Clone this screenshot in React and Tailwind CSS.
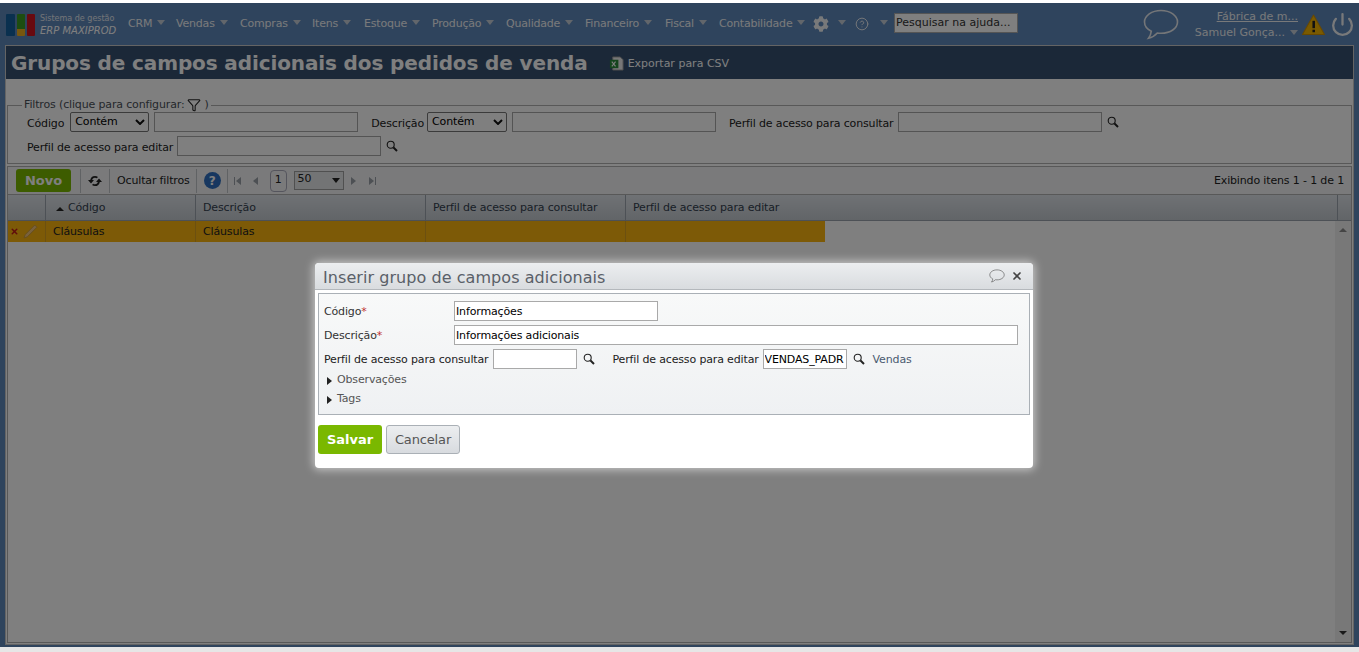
import { CircleHelp, Power, Filter, X } from 'lucide-react'
import { FaCog } from 'react-icons/fa'

const menus = [
  ['CRM', 'w-[48px]'],
  ['Vendas', 'w-[64px]'],
  ['Compras', 'w-[72px]'],
  ['Itens', 'w-[52px]'],
  ['Estoque', 'w-[68px]'],
  ['Produção', 'w-[74px]'],
  ['Qualidade', 'w-[79px]'],
  ['Financeiro', 'w-[80px]'],
  ['Fiscal', 'w-[54px]'],
  ['Contabilidade', 'w-[94px]'],
]

const Caret = ({ className = 'border-t-[#c4ccd6]' }) => (
  <span className={`inline-block w-0 h-0 border-x-[4px] border-x-transparent border-t-[5px] ${className}`} />
)

const Bubble = ({ className }) => (
  <svg viewBox="0 0 36 32" className={className} fill="none" stroke="currentColor" strokeWidth="1.6">
    <path d="M18 2C8.6 2 1.5 7.2 1.5 13.5c0 3.900 2.700 7.200 6.800 9.200-.3 2.700-1.200 5-2.800 7.100 3.600-.8 6.600-2.800 8.800-5.300 1.200.2 2.400.3 3.700.3 9.400 0 16.500-5 16.500-11.300S27.400 2 18 2z" />
  </svg>
)

const Lupa = ({ className = '' }) => (
  <svg viewBox="0 0 12 12" className={`w-[12px] h-[12px] shrink-0 ${className}`} fill="none" stroke="#222">
    <circle cx="4.700" cy="4.700" r="3.500" strokeWidth="1.100" />
    <path d="M7.500 7.500L11 11" strokeWidth="2" />
  </svg>
)

const TextField = ({ className, value = '' }) => (
  <input
    readOnly
    value={value}
    className={`h-[20px] bg-white border border-[#a9a9a9] px-[1px] text-[11px] text-black outline-none ${className}`}
  />
)

const SelectBox = ({ className }) => (
  <div className={`h-[20px] bg-white border border-[#767676] rounded-[2px] pl-[4px] flex items-center justify-between pr-[3px] text-black ${className}`}>
    <span>Contém</span>
    <svg viewBox="0 0 10 6" className="w-[10px] h-[6px]" fill="none" stroke="#111" strokeWidth="2"><path d="M1 1l4 4 4-4" /></svg>
  </div>
)

const HeaderCell = ({ className, children }) => (
  <div className={`h-full border-r border-[#9aa3ad] flex items-center pl-[7px] pt-[2px] text-[#333f4f] ${className}`}>{children}</div>
)

const PagerArrow = ({ flip, bar }) => (
  <span className={`flex items-center gap-[1px] ${flip ? 'flex-row-reverse' : ''}`}>
    {bar && <span className="w-[1px] h-[8px] bg-[#9aa0a8]" />}
    <span className={`w-0 h-0 border-y-[4px] border-y-transparent ${flip ? 'border-l-[5px] border-l-[#9aa0a8]' : 'border-r-[5px] border-r-[#9aa0a8]'}`} />
  </span>
)

const App = () => {
  return (
    <div className="relative h-[652px] w-[1359px] overflow-hidden bg-[#e6e6e6] text-[11px] tracking-[-0.15px] text-[#222] font-['DejaVu_Sans','Liberation_Sans',sans-serif]">
      <div className="h-[3px] bg-white" />

      <div className="relative h-[644px] bg-[#5f88ba]">
        {/* Top navigation */}
        <div className="h-[42px] flex items-center text-[#fff]">
          <div className="w-[128px] flex items-center pl-[6px] shrink-0">
            <div className="flex gap-[2px] h-[22px] mt-[1px]">
              <span className="w-[9px] rounded-[1px] bg-[#14609f]" />
              <span className="w-[8px] rounded-[1px] flex flex-col">
                <span className="h-[15px] bg-[#3a9a20] rounded-t-[1px]" />
                <span className="h-[7px] bg-[#f0ae1e] rounded-b-[1px]" />
              </span>
              <span className="w-[8px] rounded-[1px] bg-[#d01420]" />
            </div>
            <div className="ml-[5px] leading-[12px] mt-[1px] tracking-normal">
              <div className="text-[8px] text-[#e4e9f0]">Sistema de gestão</div>
              <div className="text-[10px] italic text-[#fff]">ERP MAXIPROD</div>
            </div>
          </div>
          {menus.map(([label, width]) => (
            <div key={label} className={`${width} shrink-0 flex items-center gap-[5px] text-[#f2f4f7] tracking-[-0.2px]`}>
              <span>{label}</span>
              <span className="-mt-[4px] flex"><Caret /></span>
            </div>
          ))}
          <div className="w-[25px] shrink-0">
            <FaCog size={16} className="text-[#f0f2f5]" />
          </div>
          <span className="-mt-[4px] w-[17px] shrink-0 flex"><Caret /></span>
          <CircleHelp size={14} strokeWidth={1.6} className="text-[#f0f2f5] shrink-0" />
          <span className="-mt-[4px] w-[14px] ml-[11px] shrink-0 flex"><Caret /></span>
          <div className="w-[124px] h-[20px] -mt-[2px] bg-[#fff] border border-[#aaa] pl-[1px] flex items-center text-[#333] shrink-0 tracking-normal">Pesquisar na ajuda...</div>
          <Bubble className="w-[36px] h-[33px] ml-[125px] text-[#e8ecf1] shrink-0" />
          <div className="w-[104px] ml-[15px] shrink-0 text-[#f0f2f5] text-right">
            <div className="underline leading-[14px] tracking-normal mt-[1px]">Fábrica de m...</div>
            <div className="flex items-center justify-end gap-[5px] leading-[14px] mt-[2px] tracking-normal">
              <span>Samuel Gonça...</span>
              <span className="flex"><Caret /></span>
            </div>
          </div>
          <svg viewBox="0 0 22 20" className="w-[23px] h-[21px] ml-[4px] shrink-0">
            <path d="M11 1L21.500 19.500H.5z" fill="#f5b400" stroke="#d09000" strokeWidth="1" strokeLinejoin="round" />
            <rect x="10" y="6.500" width="2.400" height="7" fill="#222" />
            <rect x="10" y="15" width="2.400" height="2.400" fill="#222" />
          </svg>
          <Power size={25} strokeWidth={2.2} className="ml-[5px] text-[#f0f2f5] shrink-0" />
        </div>

        {/* Page panel */}
        <div className="mx-[5px] h-[600px] border border-[#c8c8c8] bg-white flex flex-col">
          {/* Title */}
          <div className="h-[33px] bg-[#365070] flex items-center pl-[5px] shrink-0">
            <h1 className="text-[20px] leading-[33px] tracking-[-0.12px] font-bold text-white mt-[1px]">Grupos de campos adicionais dos pedidos de venda</h1>
            <svg viewBox="0 0 16 16" className="w-[15px] h-[15px] ml-[21px] mt-[1px]">
              <path d="M4 1h8l3 3v11H4z" fill="#eee" stroke="#999" />
              <rect x="1" y="4" width="9" height="9" fill="#2a8a3a" />
              <path d="M3 6l4 5M7 6l-4 5" stroke="#fff" strokeWidth="1.200" />
            </svg>
            <span className="ml-[4px] text-white tracking-normal mt-[3px]">Exportar para CSV</span>
          </div>

          {/* Filters */}
          <fieldset className="mt-[19px] mx-[1px] h-[66px] border border-[#b0b0b0] px-[19px] shrink-0">
            <legend className="ml-[-5px] px-[2px] flex items-center text-[#4a5058] leading-[14px]">
              Filtros (clique para configurar:
              <Filter size={14} strokeWidth={1.8} className="mx-[3px] text-[#222]" />)
            </legend>
            <div className="flex items-center h-[20px]">
              <span className="pt-[5px]">Código</span>
              <SelectBox className="w-[79px] ml-[6px]" />
              <TextField className="w-[204px] ml-[5px]" />
              <span className="ml-[13px] pt-[5px]">Descrição</span>
              <SelectBox className="w-[80px] ml-[3px]" />
              <TextField className="w-[204px] ml-[5px]" />
              <span className="ml-[13px] pt-[5px]">Perfil de acesso para consultar</span>
              <TextField className="w-[204px] ml-[5px]" />
              <Lupa className="ml-[5px]" />
            </div>
            <div className="flex items-center h-[20px] mt-[4px]">
              <span className="pt-[5px]">Perfil de acesso para editar</span>
              <TextField className="w-[204px] ml-[4px]" />
              <Lupa className="ml-[5px]" />
            </div>
          </fieldset>

          {/* Toolbar */}
          <div className="mt-[2px] mx-[1px] h-[28px] border-x border-t border-[#b0b0b0] bg-[#f4f5f6] flex items-center shrink-0">
            <button className="ml-[8px] w-[55px] h-[23px] rounded-[3px] bg-[#7ab800] text-white font-bold text-[13px] tracking-normal">Novo</button>
            <span className="ml-[9px] h-[24px] w-[1px] bg-[#c0c4c8]" />
            <svg viewBox="0 0 14 12" className="w-[14px] h-[12px] mx-[7px]" fill="none" stroke="#222" strokeWidth="1.800">
              <path d="M3 5.500C3.500 3 5 1.800 7 1.800c1 0 1.800.3 2.400.8" />
              <path d="M11 6.500c-.5 2.500-2 3.700-4 3.700-1 0-1.800-.3-2.400-.8" />
              <path d="M0 5h6L3 8.500zM8 7h6l-3-3.500z" fill="#222" stroke="none" />
            </svg>
            <span className="h-[24px] w-[1px] bg-[#c0c4c8]" />
            <span className="ml-[7px] pt-[2px]">Ocultar filtros</span>
            <span className="ml-[6px] h-[24px] w-[1px] bg-[#c0c4c8]" />
            <span className="ml-[7px] w-[17px] h-[17px] rounded-full bg-[#2f6fc0] text-white font-bold text-[12px] flex items-center justify-center">?</span>
            <span className="ml-[6px] h-[24px] w-[1px] bg-[#c0c4c8]" />
            <span className="ml-[6px]"><PagerArrow bar /></span>
            <span className="ml-[12px]"><PagerArrow /></span>
            <span className="ml-[12px] w-[17px] h-[22px] border border-[#aab] rounded-[4px] flex items-center justify-center">1</span>
            <div className="ml-[7px] w-[50px] h-[19px] border border-[#a0a0a0] bg-[#e6e8ea] pl-[3px] flex items-center justify-between pr-[3px]">
              <span className="-mt-[2px]">50</span>
              <Caret className="border-t-[#222]" />
            </div>
            <span className="ml-[7px]"><PagerArrow flip /></span>
            <span className="ml-[13px]"><PagerArrow flip bar /></span>
            <span className="ml-auto pr-[7px] pt-[1px]">Exibindo itens 1 - 1 de 1</span>
          </div>

          {/* Grid */}
          <div className="mx-[1px] mb-[1px] flex-1 border border-[#b0b0b0] flex flex-col min-h-0">
            <div className="h-[26px] shrink-0 flex border-b border-[#9aa3ad] bg-gradient-to-b from-[#dfe4ea] to-[#c4cad0]">
              <HeaderCell className="w-[38px]" />
              <HeaderCell className="w-[150px] pl-[10px] gap-[4px]">
                <span className="w-0 h-0 border-x-[4px] border-x-transparent border-b-[4px] border-b-[#222]" />
                Código
              </HeaderCell>
              <HeaderCell className="w-[230px]">Descrição</HeaderCell>
              <HeaderCell className="w-[200px]">Perfil de acesso para consultar</HeaderCell>
              <HeaderCell className="w-[712px]">Perfil de acesso para editar</HeaderCell>
              <div className="flex-1" />
            </div>
            <div className="flex flex-1 min-h-0">
              <div className="flex-1">
                <div className="h-[21px] w-[817px] flex bg-[#fab40e] text-[#222]">
                  <div className="w-[38px] h-full border-r border-[#d9a020] flex items-center pl-[2px] gap-[4px]">
                    <X size={9} strokeWidth={4} className="text-[#c01818]" />
                    <svg viewBox="0 0 14 14" className="w-[15px] h-[15px]">
                      <path d="M1 13l1-3 9-9 2 2-9 9z" fill="#f2c27a" stroke="#c89a40" strokeWidth=".8" />
                    </svg>
                  </div>
                  <div className="w-[150px] h-full border-r border-[#d9a020] flex items-center pl-[7px] pt-[2px]">Cláusulas</div>
                  <div className="w-[230px] h-full border-r border-[#d9a020] flex items-center pl-[7px] pt-[2px]">Cláusulas</div>
                  <div className="w-[200px] h-full border-r border-[#d9a020]" />
                </div>
              </div>
              <div className="w-[16px] bg-[#f0f0f0] flex flex-col items-center justify-between py-[7px]">
                <span className="w-0 h-0 border-x-[4px] border-x-transparent border-b-[4px] border-b-[#8a8a8a]" />
                <span className="w-0 h-0 border-x-[4px] border-x-transparent border-t-[4px] border-t-[#333]" />
              </div>
            </div>
          </div>
        </div>

        {/* Overlay */}
        <div className="absolute inset-0 bg-black/50" />
      </div>

      {/* Modal */}
      <div className="absolute left-[315px] top-[263px] w-[718px] h-[205px] bg-white rounded-[4px] shadow-[0_0_8px_2px_rgba(255,255,255,0.55)] flex flex-col">
        <div className="h-[27px] shrink-0 rounded-t-[4px] bg-gradient-to-b from-[#eceef0] to-[#d9dcdf] border-b border-[#b4b8bc] flex items-center pl-[8px] pr-[10px]">
          <span className="text-[16px] tracking-[0.06px] text-[#5a6068] mt-[4px]">Inserir grupo de campos adicionais</span>
          <Bubble className="w-[16px] h-[14px] ml-auto text-[#666]" />
          <X size={12} strokeWidth={3.4} className="ml-[6px] text-[#444]" />
        </div>
        <div className="mx-[3px] mt-[3px] h-[122px] border border-[#aab0b6] bg-gradient-to-b from-[#f8f9f9] to-[#eff1f3] pl-[5px] shrink-0">
          <div className="flex items-center h-[20px] mt-[7px]">
            <span className="w-[130px] text-[#333] pt-[2px]">Código<span className="text-[#c03030]">*</span></span>
            <TextField className="w-[204px]" value="Informações" />
          </div>
          <div className="flex items-center h-[20px] mt-[4px]">
            <span className="w-[130px] text-[#333] pt-[2px]">Descrição<span className="text-[#c03030]">*</span></span>
            <TextField className="w-[564px]" value="Informações adicionais" />
          </div>
          <div className="flex items-center h-[20px] mt-[4px]">
            <span className="pt-[2px]">Perfil de acesso para consultar</span>
            <TextField className="w-[84px] ml-[5px]" />
            <Lupa className="ml-[6px]" />
            <span className="ml-[17px] pt-[2px]">Perfil de acesso para editar</span>
            <TextField className="w-[84px] ml-[4px]" value="VENDAS_PADR" />
            <Lupa className="ml-[6px]" />
            <span className="ml-[8px] pt-[2px] text-[#4a5a70]">Vendas</span>
          </div>
          <div className="flex items-center h-[19px] mt-[2px] pl-[3px] text-[#555]">
            <span className="w-0 h-0 border-y-[4px] border-y-transparent border-l-[5px] border-l-[#222] mr-[5px]" />
            Observações
          </div>
          <div className="flex items-center h-[19px] pl-[3px] text-[#555]">
            <span className="w-0 h-0 border-y-[4px] border-y-transparent border-l-[5px] border-l-[#222] mr-[5px]" />
            Tags
          </div>
        </div>
        <div className="flex gap-[4px] mx-[3px] mt-[10px]">
          <button className="w-[64px] h-[29px] rounded-[3px] bg-[#7ab800] text-white font-bold text-[13px] tracking-normal">Salvar</button>
          <button className="w-[74px] h-[29px] rounded-[3px] border border-[#aab0b6] bg-gradient-to-b from-[#eceef0] to-[#d8dbdf] text-[#555] text-[13px]">Cancelar</button>
        </div>
      </div>
    </div>
  )
}

export default App
